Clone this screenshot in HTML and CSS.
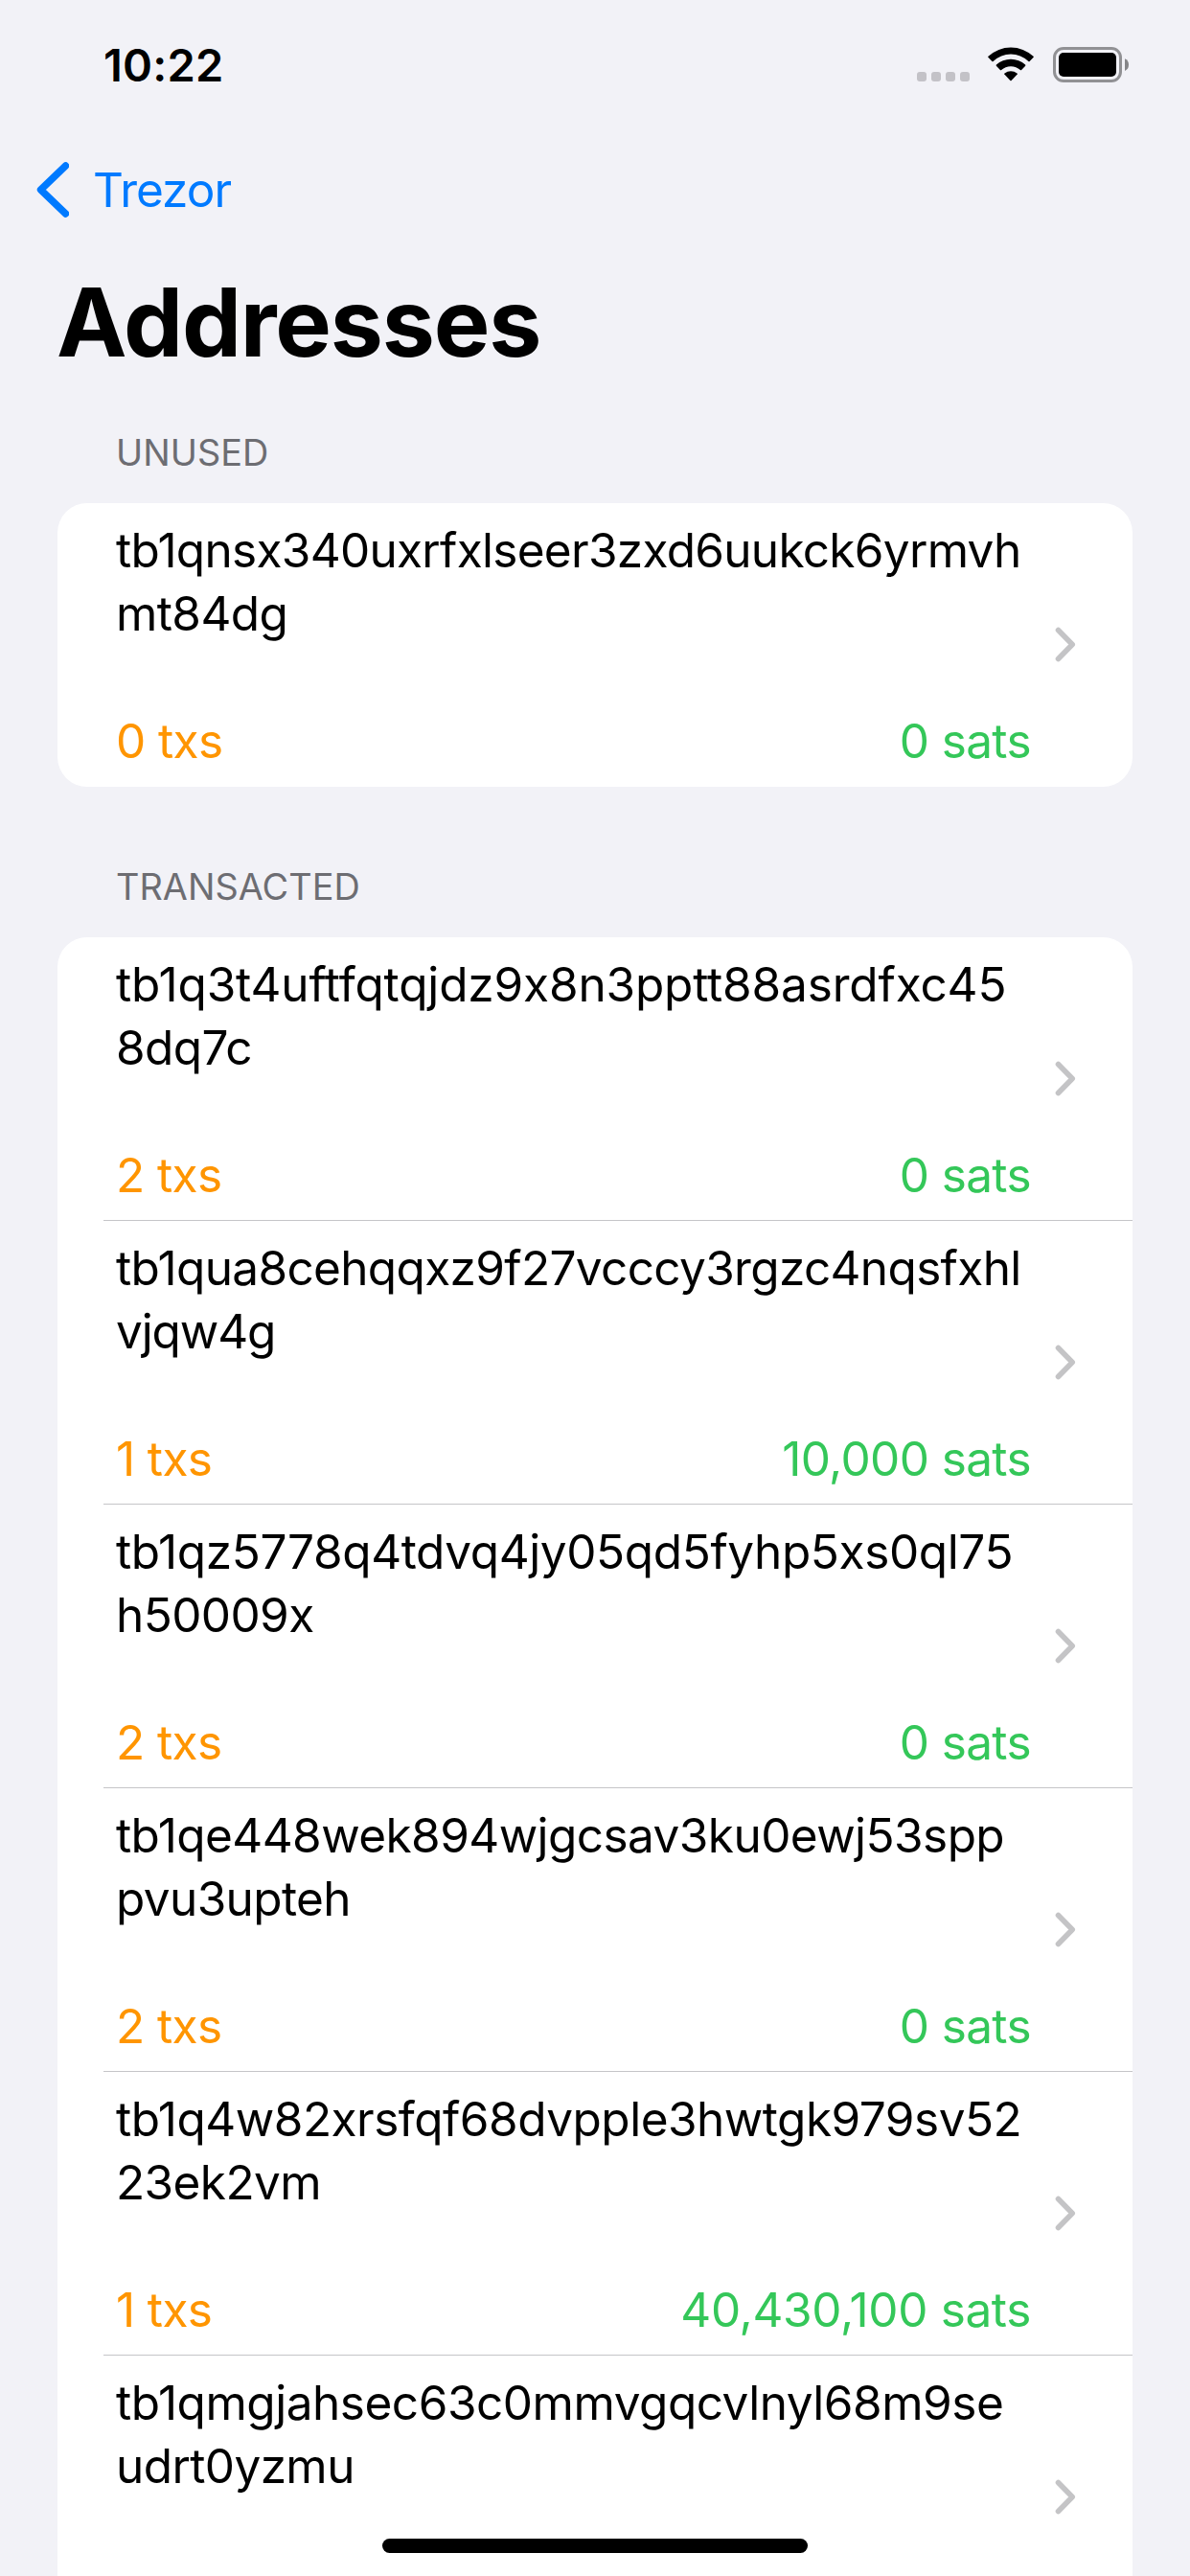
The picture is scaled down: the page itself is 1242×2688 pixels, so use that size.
FILE: index.html
```html
<!DOCTYPE html>
<html lang="en">
<head>
<meta charset="utf-8">
<title>Addresses</title>
<link rel="stylesheet" href="styles.css">
</head>
<body>
<svg width="0" height="0" class="defs"><symbol id="chev" viewBox="0 0 22 37"><path d="M3.5 3.500 18.200 18.500 3.500 33.500" fill="none" stroke="#c4c4c6" stroke-width="5.600" stroke-linecap="round" stroke-linejoin="round"/></symbol></svg>
<div class="screen">
  <header class="status">
    <span class="time">10:22</span>
    <div class="indicators">
      <div class="signal"><i></i><i></i><i></i><i></i></div>
      <svg class="wifi" width="48" height="36" viewBox="0 0 48 36">
        <path d="M0.3 10.8Q0 10.3.5 9.8A34.5 34.5 0 0 1 47.5 9.8Q48 10.3 47.7 10.8L43.6 15Q43 15.5 42.4 15A26.6 26.6 0 0 0 5.6 15Q5 15.500 4.400 15Z"/>
        <path d="M8.800 19.700Q8.400 19.200 8.900 18.600A22.400 22.400 0 0 1 39.100 18.600Q39.600 19.200 39.200 19.700L35.100 24Q34.500 24.500 33.900 24A14.600 14.600 0 0 0 14.100 24Q13.500 24.500 12.900 24Z"/>
        <path d="M17.300 28.500Q16.900 28 17.500 27.500A10.300 10.300 0 0 1 30.500 27.500Q31.100 28 30.700 28.500L24.600 34.900Q24 35.500 23.400 34.900Z"/>
      </svg>
      <svg class="battery" width="80" height="37" viewBox="0 0 80 37">
        <rect x="1.500" y="1.500" width="69" height="34" rx="9.500" fill="none" stroke="#919194" stroke-width="3"/>
        <rect x="6" y="6" width="60" height="25" rx="5"/>
        <path d="M75 12.200Q79 14 79 18.500Q79 23 75 25Z" fill="#858588"/>
      </svg>
    </div>
  </header>
  <nav class="nav">
    <svg width="34" height="58" viewBox="0 0 34 58"><path d="M30.500 4 4.500 29 30.500 54" fill="none" stroke="#007aff" stroke-width="7.400" stroke-linecap="round" stroke-linejoin="round"/></svg>
    <span class="back">Trezor</span>
  </nav>
  <h1 class="title">Addresses</h1>
  <main>
    <h2 class="section unused">UNUSED</h2>
    <div class="card">
      <div class="row"><div class="info"><p class="addr"><span>tb1qnsx340uxrfxlseer3zxd6uukck6yrmvh</span><br>mt84dg</p><div class="meta"><span class="txs">0 txs</span><span class="sats">0 sats</span></div></div><svg class="chev"><use href="#chev"/></svg></div>
    </div>
    <h2 class="section transacted">TRANSACTED</h2>
    <div class="card history">
      <div class="row"><div class="info"><p class="addr"><span>tb1q3t4uftfqtqjdz9x8n3pptt88asrdfxc45</span><br>8dq7c</p><div class="meta"><span class="txs">2 txs</span><span class="sats">0 sats</span></div></div><svg class="chev"><use href="#chev"/></svg></div>
      <div class="row"><div class="info"><p class="addr"><span>tb1qua8cehqqxz9f27vcccy3rgzc4nqsfxhl</span><br>vjqw4g</p><div class="meta"><span class="txs">1 txs</span><span class="sats">10,000 sats</span></div></div><svg class="chev"><use href="#chev"/></svg></div>
      <div class="row"><div class="info"><p class="addr"><span>tb1qz5778q4tdvq4jy05qd5fyhp5xs0ql75</span><br>h50009x</p><div class="meta"><span class="txs">2 txs</span><span class="sats">0 sats</span></div></div><svg class="chev"><use href="#chev"/></svg></div>
      <div class="row"><div class="info"><p class="addr"><span>tb1qe448wek894wjgcsav3ku0ewj53spp</span><br>pvu3upteh</p><div class="meta"><span class="txs">2 txs</span><span class="sats">0 sats</span></div></div><svg class="chev"><use href="#chev"/></svg></div>
      <div class="row"><div class="info"><p class="addr"><span>tb1q4w82xrsfqf68dvpple3hwtgk979sv52</span><br>23ek2vm</p><div class="meta"><span class="txs">1 txs</span><span class="sats">40,430,100 sats</span></div></div><svg class="chev"><use href="#chev"/></svg></div>
      <div class="row"><div class="info"><p class="addr"><span>tb1qmgjahsec63c0mmvgqcvlnyl68m9se</span><br>udrt0yzmu</p><div class="meta"><span class="txs">2 txs</span><span class="sats">0 sats</span></div></div><svg class="chev"><use href="#chev"/></svg></div>
    </div>
  </main>
  <div class="home"></div>
</div>
</body>
</html>
```
FILE: styles.css
```css
* { box-sizing: border-box; margin: 0; padding: 0; }
body { background: #f2f2f7; font-family: Inter, "Liberation Sans", sans-serif; color: #000; }
.defs { position: absolute; }
.screen { position: relative; width: 1242px; height: 2688px; overflow: hidden; }
.status { height: 132px; padding: 49px 63px 0 108px; display: flex; justify-content: space-between; align-items: flex-start; }
.time { font-size: 47px; font-weight: 600; line-height: 38px; letter-spacing: 0.2px; }
.indicators { display: flex; align-items: flex-start; }
.signal { display: flex; gap: 5px; padding-top: 26px; margin-right: 19px; }
.signal i { width: 10px; height: 10px; border-radius: 3px; background: #c3c2c7; }
.wifi { margin-right: 20px; }
.nav { height: 132px; display: flex; align-items: center; padding-left: 38px; }
.back { margin-left: 25px; font-size: 49.5px; line-height: 66px; color: #007aff; letter-spacing: -1px; }
.title { height: 156px; padding-left: 59px; font-size: 98.5px; font-weight: 700; line-height: 145px; letter-spacing: -1.2px; }
.section { height: 105px; padding: 20px 0 0 121px; font-size: 37.8px; font-weight: 400; line-height: 64px; letter-spacing: 0.05px; color: #6d6d72; }
.transacted { height: 157px; padding-top: 72px; }
.card { margin: 0 60px; background: #fff; border-radius: 31px; }
.row { position: relative; height: 296px; display: flex; align-items: center; padding: 0 59px 0 61px; }
.row + .row::before { content: ""; position: absolute; left: 48px; right: 0; top: -1px; height: 1px; background: #c5c5c8; }
.info { width: 955px; height: 296px; padding-top: 16px; font-size: 49.5px; line-height: 66px; letter-spacing: -0.6px; font-feature-settings: "calt" 0; }
.addr { white-space: nowrap; }
.addr span { letter-spacing: -0.7px; }
.history .row:nth-child(1) .addr span { letter-spacing: -0.15px; }
.history .row:nth-child(2) .addr span { letter-spacing: -0.65px; }
.history .row:nth-child(2) .addr { letter-spacing: -1.1px; }
.history .row:nth-child(3) .addr span { letter-spacing: -0.38px; }
.history .row:nth-child(4) .addr span { letter-spacing: -0.57px; }
.history .row:nth-child(5) .addr span { letter-spacing: -0.5px; }
.history .row:nth-child(6) .addr span { letter-spacing: -0.47px; }
.history .row:nth-child(5) .sats { letter-spacing: -0.35px; }
.meta { display: flex; justify-content: space-between; margin-top: 67px; }
.txs { color: #ff9500; }
.sats { color: #34c759; }
.chev { width: 22px; height: 37px; margin: 0 0 2px auto; }
.home { position: absolute; left: 399px; top: 2649px; width: 444px; height: 15px; border-radius: 8px; background: #000; }
```
